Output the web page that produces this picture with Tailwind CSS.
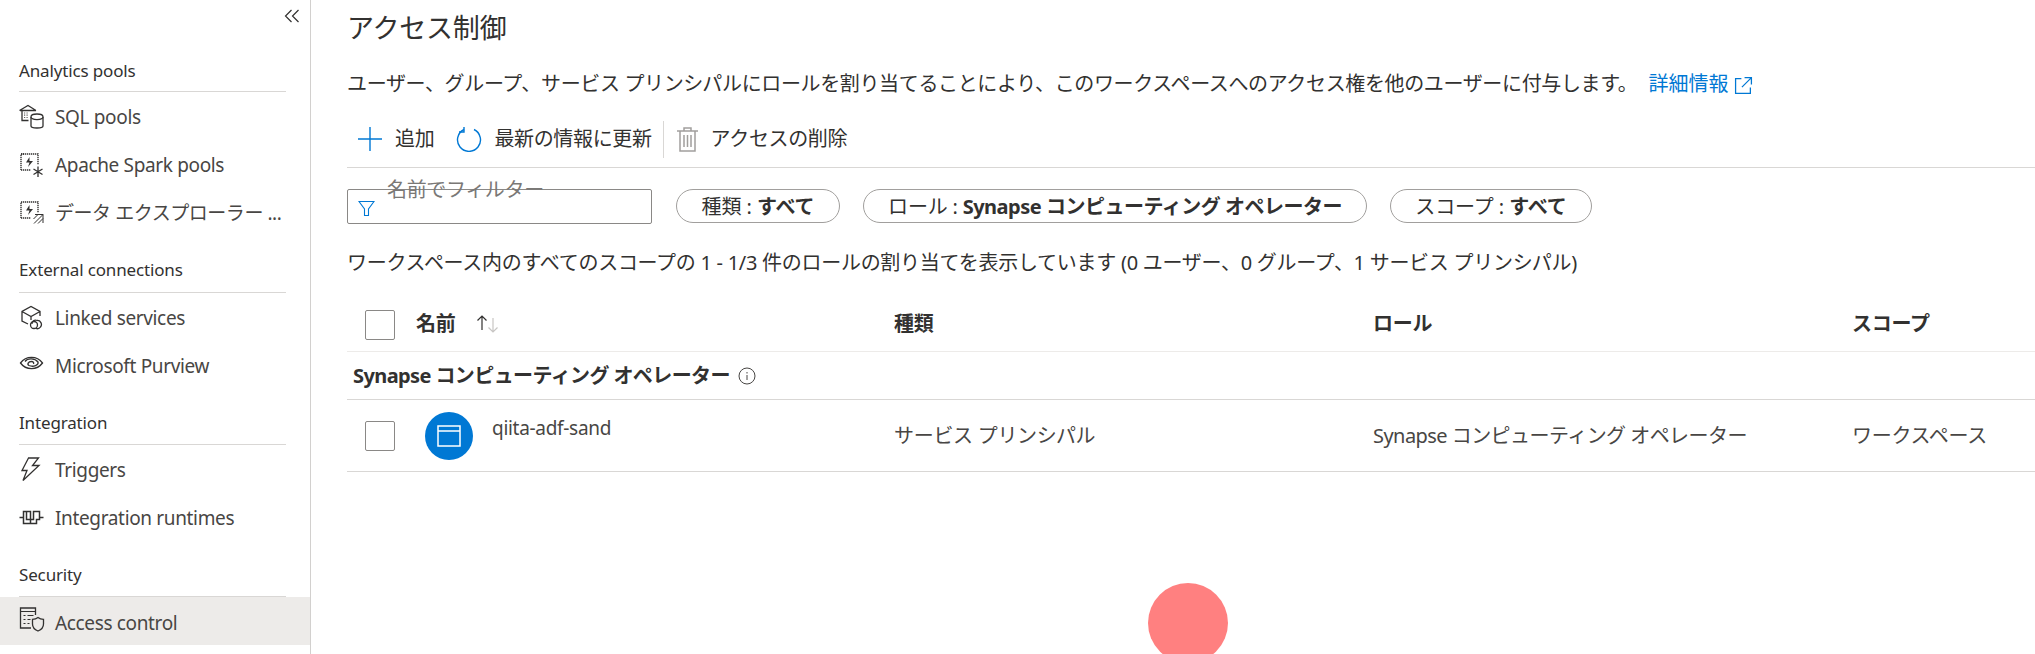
<!DOCTYPE html>
<html lang="ja">
<head>
<meta charset="UTF-8">
<title>アクセス制御</title>
<script src="https://cdn.jsdelivr.net/npm/@tailwindcss/browser@4"></script>
</head>
<body class="bg-white">
<div class="relative flex h-[654px] w-[2035px] overflow-hidden bg-white font-['Noto_Sans','Noto_Sans_CJK_JP',sans-serif] text-[20px] text-[#323130]">

  <!-- Sidebar -->
  <aside class="h-full w-[311px] shrink-0 border-r border-[#d2d0ce]">
    <div class="flex h-[36px] justify-end pr-[10px] pt-[8px]">
      <svg class="h-[16px] w-[16px]" viewBox="0 0 16 16" fill="none" stroke="#323130" stroke-width="1.200"><path d="M7.500 2 1.500 8l6 6M14.500 2l-6 6 6 6"/></svg>
    </div>

    <div class="ml-[19px] mr-[24px] flex h-[56px] items-start border-b border-[#d9d7d5] pt-[21px] text-[17px] leading-[28px] tracking-[-0.15px]">Analytics pools</div>
    <a class="flex h-[48px] items-center pl-[19px]">
      <svg class="mr-[11px] h-[25px] w-[25px] shrink-0" viewBox="0 0 25 25" fill="none" stroke="#323130" stroke-width="1.300"><path d="M.5 6.500 9 1.500l8 5M3 6.500V16.500h6.500M1 6.500h16"/><path d="M5 9h1.200M7.500 9h1.200M5 11.200h1.200M7.500 11.200h1.200M5 13.500h1.200M7.500 13.500h1.200" stroke="#605e5c" stroke-width="1.200"/><path d="M12 13v9c0 1 2.200 2 6 2s6-1 6-2v-9"/><ellipse cx="18" cy="12.800" rx="6" ry="2.800" fill="#fff"/></svg>
      <span class="mt-[2px] text-[19px] tracking-[-0.35px] text-[#484644]">SQL pools</span>
    </a>
    <a class="flex h-[48px] items-center pl-[19px]">
      <svg class="mr-[11px] h-[25px] w-[25px] shrink-0" viewBox="0 0 25 25" fill="none" stroke="#323130" stroke-width="1.400"><path d="M2 18V2h17v11" stroke-dasharray="1.300 .7"/><path d="M2 2h3M2 18h10" stroke-dasharray="1.300 .7"/><path d="M10.500 5 7 10.500h3.500L9 15l5-6h-3.500z" fill="#323130" stroke="none"/><path d="M19 14.500V25M14.500 17l9 5.500M23.500 17l-9 5.500" stroke-width="1.300"/></svg>
      <span class="mt-[2px] text-[19px] tracking-[-0.35px] text-[#484644]">Apache Spark pools</span>
    </a>
    <a class="flex h-[48px] items-center pl-[19px]">
      <svg class="mr-[11px] h-[25px] w-[25px] shrink-0" viewBox="0 0 25 25" fill="none" stroke="#323130" stroke-width="1.400"><path d="M2 18V2h17v11" stroke-dasharray="1.300 .7"/><path d="M2 18h10" stroke-dasharray="1.300 .7"/><path d="M10.500 5 7 10.500h3.500L9 15l5-6h-3.500z" fill="#323130" stroke="none"/><path d="M16 14.500h8v8.500M24 14.500 15 23.500M19 23.500l5-5M14.500 19l4.500-4.500" stroke-width="1"/></svg>
      <span class="mt-[2px] text-[19px] tracking-[-0.45px] text-[#484644]">データ エクスプローラー ...</span>
    </a>

    <div class="ml-[19px] mr-[24px] flex h-[57px] items-start border-b border-[#d9d7d5] pt-[20px] text-[17px] leading-[28px] tracking-[-0.15px]">External connections</div>
    <a class="flex h-[48px] items-center pl-[19px]">
      <svg class="mr-[11px] h-[25px] w-[25px] shrink-0" viewBox="0 0 25 25" fill="none" stroke="#323130" stroke-width="1.300"><path d="M9 19 3 16V6.500L12 1.500l9 5V11M3 6.500l9 5 9-5M12 11.500V15"/><path d="M18 15.500a4 4 0 0 1 3.500 6.500c-1 1.500-3 2-4.500 1.500M13 19a3.500 3.500 0 0 1 5-3.500"/><circle cx="15" cy="20" r="3.500"/></svg>
      <span class="mt-[2px] text-[19px] tracking-[-0.35px] text-[#484644]">Linked services</span>
    </a>
    <a class="flex h-[48px] items-center pl-[19px]">
      <svg class="mr-[11px] h-[25px] w-[25px] shrink-0" viewBox="0 0 25 25" fill="none" stroke="#323130" stroke-width="1.300"><path d="M1.500 10c5.500-7.500 16.500-7.500 22 0-5.500 7.500-16.500 7.500-22 0Z"/><path d="M6 8.500c2.500-3.500 10-3.500 13 .5 1 3-4.500 5.500-9 3.500-2-1-1-4 2.500-4 2 0 2.500 1.500 2 2.500"/></svg>
      <span class="mt-[2px] text-[19px] tracking-[-0.35px] text-[#484644]">Microsoft Purview</span>
    </a>

    <div class="ml-[19px] mr-[24px] flex h-[56px] items-start border-b border-[#d9d7d5] pt-[20px] text-[17px] leading-[28px] tracking-[-0.15px]">Integration</div>
    <a class="flex h-[48px] items-center pl-[19px]">
      <svg class="mr-[11px] h-[25px] w-[25px] shrink-0" viewBox="0 0 25 25" fill="none" stroke="#323130" stroke-width="1.300"><path d="M9.500 1 3 13.500h5L4 23.500 20 8.500h-6.500L19.500 1z"/></svg>
      <span class="mt-[2px] text-[19px] tracking-[-0.35px] text-[#484644]">Triggers</span>
    </a>
    <a class="flex h-[48px] items-center pl-[19px]">
      <svg class="mr-[11px] h-[25px] w-[25px] shrink-0" viewBox="0 0 25 25" fill="none" stroke="#323130" stroke-width="1.500"><path d="M.5 12.500h3.500M21 12.500h3.500"/><path d="M4.500 6.500h7v12h-7zM7.500 6.500v8h7V6.500h6v8h-3v4h-6"/></svg>
      <span class="mt-[2px] text-[19px] tracking-[-0.35px] text-[#484644]">Integration runtimes</span>
    </a>

    <div class="ml-[19px] mr-[24px] flex h-[56px] items-start border-b border-[#d9d7d5] pt-[20px] text-[17px] leading-[28px] tracking-[-0.15px]">Security</div>
    <a class="flex h-[48px] items-center bg-[#edebe9] pl-[19px]">
      <svg class="mb-[3px] mr-[10px] h-[25px] w-[26px] shrink-0" viewBox="0 0 26 25" fill="none" stroke="#323130" stroke-width="1.300"><path d="M12 21H1.500V1h15v7"/><path d="M1.500 4.500h15M4.500 8.500h2M8.500 8.500h6M4.500 12.500h2M8.500 12.500h3M4.500 16.500h2M8.500 16.500h2" stroke-width="1.200"/><path d="M19 10.500c1.500 1.200 3.300 1.800 5.500 1.800V17c0 3.500-2.500 5.800-5.500 7-3-1.200-5.500-3.500-5.500-7v-4.700c2.200 0 4-.6 5.500-1.800Z"/></svg>
      <span class="mt-[4px] text-[19px] tracking-[-0.35px] text-[#484644]">Access control</span>
    </a>
  </aside>

  <!-- Main -->
  <main class="min-w-0 flex-1 pl-[36px]">
    <h1 class="flex h-[56px] items-center text-[27px] font-normal tracking-[-0.2px] text-[#323130]">アクセス制御</h1>

    <div class="flex h-[55px] items-center whitespace-nowrap">
      <span class="tracking-[-0.36px]">ユーザー、グループ、サービス プリンシパルにロールを割り当てることにより、このワークスペースへのアクセス権を他のユーザーに付与します。</span>
      <a class="ml-[11px] flex items-center text-[#0078d4]">詳細情報
        <svg class="ml-[6px] mt-[4px] h-[19px] w-[19px]" viewBox="0 0 18 18" fill="none" stroke="#0078d4" stroke-width="1.200"><path d="M7 2.500H1.500v14h14V11M10 1.500h6.500V8M16.500 1.500 7.500 10.500"/></svg>
      </a>
    </div>

    <div class="flex h-[57px] items-center border-b border-[#d9d7d5]">
      <svg class="ml-[11px] h-[24px] w-[24px]" viewBox="0 0 24 24" fill="none" stroke="#0078d4" stroke-width="1.400"><path d="M12 0v24M0 12h24"/></svg>
      <span class="ml-[13px] tracking-[-0.3px]">追加</span>
      <svg class="ml-[22px] h-[26px] w-[26px]" viewBox="0 0 26 26" fill="none" stroke="#0078d4" stroke-width="1.400"><path d="M8 3.500a11.500 11.500 0 1 0 10 0"/><path d="M8 1v5H3"/></svg>
      <span class="ml-[12px] tracking-[-0.35px]">最新の情報に更新</span>
      <span class="ml-[11px] h-[37px] w-px bg-[#d9d7d5]"></span>
      <svg class="ml-[13px] h-[26px] w-[21px]" viewBox="0 0 21 26" fill="none" stroke="#a19f9d" stroke-width="1.500"><path d="M0 5h21M7 5V2h7v3M3 5v20h15V5"/><path d="M7 9v12M10.500 9v12M14 9v12"/></svg>
      <span class="ml-[13px] tracking-[-0.35px]">アクセスの削除</span>
    </div>

    <div class="mt-[21px] flex h-[35px] items-start">
      <div class="relative h-[35px] w-[305px] rounded-[2px] border border-[#8a8886] bg-white">
        <svg class="absolute left-[10px] top-[10px] h-[17px] w-[17px]" viewBox="0 0 17 17" fill="none" stroke="#0078d4" stroke-width="1.100"><path d="M1 1.500h15L10.500 9v6.500h-4V9z"/></svg>
        <span class="absolute left-[39px] top-[-14px] whitespace-nowrap leading-[28px] tracking-[-0.35px] text-[#7a7876]">名前でフィルター</span>
      </div>
      <div class="ml-[24px] flex h-[34px] w-[164px] items-center justify-center rounded-full border border-[#a19f9d] pt-[1px] tracking-[-0.1px]">種類 :&nbsp;<b class="font-bold">すべて</b></div>
      <div class="ml-[23px] flex h-[34px] w-[504px] items-center justify-center whitespace-nowrap rounded-full border border-[#a19f9d] pt-[1px] tracking-[-0.2px]">ロール :&nbsp;<b class="font-bold tracking-[-0.5px]">Synapse コンピューティング オペレーター</b></div>
      <div class="ml-[23px] flex h-[34px] w-[202px] items-center justify-center rounded-full border border-[#a19f9d] pt-[1px] tracking-[-0.1px]">スコープ :&nbsp;<b class="font-bold">すべて</b></div>
    </div>

    <div class="flex h-[72px] items-center whitespace-nowrap pt-[6px] tracking-[-0.28px]">ワークスペース内のすべてのスコープの 1 - 1/3 件のロールの割り当てを表示しています (0 ユーザー、0 グループ、1 サービス プリンシパル)</div>

    <div class="grid h-[56px] grid-cols-[547px_479px_479px_1fr] items-center border-b border-[#edebe9] font-bold tracking-[-0.3px]">
      <div class="flex items-center pl-[18px]">
        <span class="mt-[3px] h-[30px] w-[30px] rounded-[2px] border border-[#8a8886]"></span>
        <span class="ml-[21px]">名前</span>
        <svg class="ml-[21px] h-[18px] w-[24px]" viewBox="0 0 24 18" fill="none" stroke-width="1.200"><path d="M6 15V1M1.500 5.500 6 1l4.500 4.500" stroke="#323130"/><path d="M17 3v14M12.500 12.500 17 17l4.500-4.500" stroke="#c8c6c4"/></svg>
      </div>
      <div>種類</div>
      <div>ロール</div>
      <div>スコープ</div>
    </div>

    <div class="flex h-[48px] items-center border-b border-[#d9d7d5] pl-[6px]">
      <span class="font-bold tracking-[-0.6px]">Synapse コンピューティング オペレーター</span>
      <svg class="ml-[8px] h-[18px] w-[18px]" viewBox="0 0 18 18" fill="none" stroke="#484644"><circle cx="9" cy="9" r="8"/><path d="M9 8v5M9 5v1.500"/></svg>
    </div>

    <div class="grid h-[72px] grid-cols-[547px_479px_479px_1fr] items-center border-b border-[#d9d7d5] tracking-[-0.3px] text-[#484644]">
      <div class="flex items-center pl-[18px]">
        <span class="h-[30px] w-[30px] rounded-[2px] border border-[#8a8886]"></span>
        <span class="ml-[30px] flex h-[48px] w-[48px] items-center justify-center rounded-full bg-[#0078d4]">
          <svg class="h-[24px] w-[24px]" viewBox="0 0 24 24" fill="none" stroke="#fff" stroke-width="1.500"><path d="M1 2h22v20H1zM1 7h22"/></svg>
        </span>
        <span class="mb-[14px] ml-[19px] text-[19px] tracking-[-0.3px]">qiita-adf-sand</span>
      </div>
      <div>サービス プリンシパル</div>
      <div class="whitespace-nowrap tracking-[-0.55px]">Synapse コンピューティング オペレーター</div>
      <div>ワークスペース</div>
    </div>
  </main>

  <!-- click marker -->
  <div class="absolute left-[1148px] top-[583px] h-[80px] w-[80px] rounded-full bg-[#ff8080]"></div>
</div>
</body>
</html>
